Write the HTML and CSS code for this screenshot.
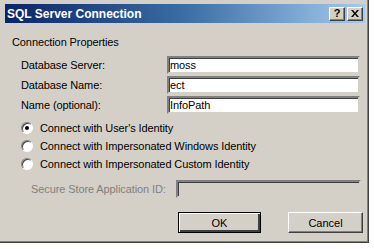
FILE: index.html
```html
<!DOCTYPE html>
<html lang="en">
<head>
    <meta charset="UTF-8">
    <title>SQL Server Connection</title>
    <link rel="stylesheet" href="styles.css">
</head>
<body>
    <div class="window">
        <div class="titlebar">
            <span class="title">SQL Server Connection</span>
            <div class="caption-buttons">
                <span class="cap-btn">?</span>
                <span class="cap-btn cap-close">
                    <svg width="8" height="7" viewBox="0 0 8 7"><path d="M0 0h2l2 2.5L6 0h2L5 3.5 8 7H6L4 4.5 2 7H0l3-3.5z" fill="#000"/></svg>
                </span>
            </div>
        </div>
        <div class="content">
            <div class="group-title">Connection Properties</div>
            <div class="fields">
                <label class="field-label">Database Server:</label>
                <div class="textbox">moss</div>
                <label class="field-label">Database Name:</label>
                <div class="textbox">ect</div>
                <label class="field-label">Name (optional):</label>
                <div class="textbox">InfoPath</div>
            </div>
            <div class="radios">
                <div class="radio-row"><span class="radio checked"></span>Connect with User's Identity</div>
                <div class="radio-row"><span class="radio"></span>Connect with Impersonated Windows Identity</div>
                <div class="radio-row"><span class="radio"></span>Connect with Impersonated Custom Identity</div>
            </div>
            <div class="secure-row">
                <span class="secure-label">Secure Store Application ID:</span>
                <div class="textbox disabled"></div>
            </div>
            <div class="actions">
                <button class="btn default">OK</button>
                <button class="btn">Cancel</button>
            </div>
        </div>
    </div>
</body>
</html>
```

FILE: styles.css
```css
body {
    margin: 0;
    background: #ffffff;
    font-family: "Liberation Sans", Arial, sans-serif;
    font-size: 11px;
    letter-spacing: -0.1px;
    color: #000;
}
.window {
    width: 369px;
    height: 243px;
    box-sizing: border-box;
    background: #d4d0c8;
    border-right: 1px solid #404040;
    border-bottom: 1px solid #404040;
    box-shadow: inset -1px -1px 0 #808080;
    padding: 4px 3px 0 5px;
}
.titlebar {
    height: 19px;
    background: linear-gradient(to right, #0a246a 0%, #3a6ea5 50%, #a6caf0 100%);
    display: flex;
    align-items: center;
    justify-content: space-between;
    padding: 0 2px 0 2px;
}
.title {
    color: #fff;
    font-weight: bold;
    font-size: 12px;
    letter-spacing: 0;
}
.caption-buttons {
    display: flex;
}
.cap-btn {
    width: 16px;
    height: 14px;
    box-sizing: border-box;
    background: #d4d0c8;
    border: 1px solid;
    border-color: #fff #404040 #404040 #fff;
    box-shadow: inset -1px -1px 0 #808080;
    display: flex;
    align-items: center;
    justify-content: center;
    font-weight: bold;
    font-size: 11px;
    line-height: 1;
}
.cap-close {
    margin-left: 2px;
}
.content {
    padding: 12px 0 0 7px;
}
.group-title {
    line-height: 14px;
}
.fields {
    display: grid;
    grid-template-columns: 146px 193px;
    row-gap: 2px;
    margin-top: 7px;
    padding-left: 9px;
}
.field-label {
    line-height: 18px;
}
.textbox {
    height: 18px;
    box-sizing: border-box;
    background: #fff;
    border: 2px solid;
    border-color: #808080 #d4d0c8 #d4d0c8 #808080;
    box-shadow: inset 1px 1px 0 #404040;
    padding-left: 1px;
    line-height: 14px;
}
.radios {
    margin-top: 5px;
    padding-left: 9px;
}
.radio-row {
    display: flex;
    align-items: center;
    height: 18px;
}
.radio {
    width: 12px;
    height: 12px;
    box-sizing: border-box;
    border-radius: 50%;
    background: #fff;
    border: 1px solid;
    border-color: #808080 #fff #fff #808080;
    box-shadow: inset 1px 1px 0 #404040;
    margin-right: 7px;
    position: relative;
}
.radio.checked::after {
    content: "";
    position: absolute;
    left: 3px;
    top: 3px;
    width: 4px;
    height: 4px;
    border-radius: 50%;
    background: #000;
}
.secure-row {
    display: flex;
    align-items: center;
    margin-top: 7px;
    padding-left: 19px;
}
.secure-label {
    color: #808080;
    width: 145px;
}
.textbox.disabled {
    width: 185px;
    background: #d4d0c8;
}
.actions {
    display: flex;
    justify-content: flex-end;
    gap: 27px;
    margin-top: 14px;
    padding-right: 2px;
}
.btn {
    width: 75px;
    height: 21px;
    box-sizing: border-box;
    background: #d4d0c8;
    border: 1px solid;
    border-color: #fff #404040 #404040 #fff;
    box-shadow: inset -1px -1px 0 #808080;
    font-family: "Liberation Sans", Arial, sans-serif;
    font-size: 11px;
    padding: 0;
    color: #000;
}
.btn.default {
    width: 83px;
    border: 1px solid #000;
    box-shadow: inset 1px 1px 0 #fff, inset -2px -2px 0 #404040, inset -1px -1px 0 #808080;
}
```
